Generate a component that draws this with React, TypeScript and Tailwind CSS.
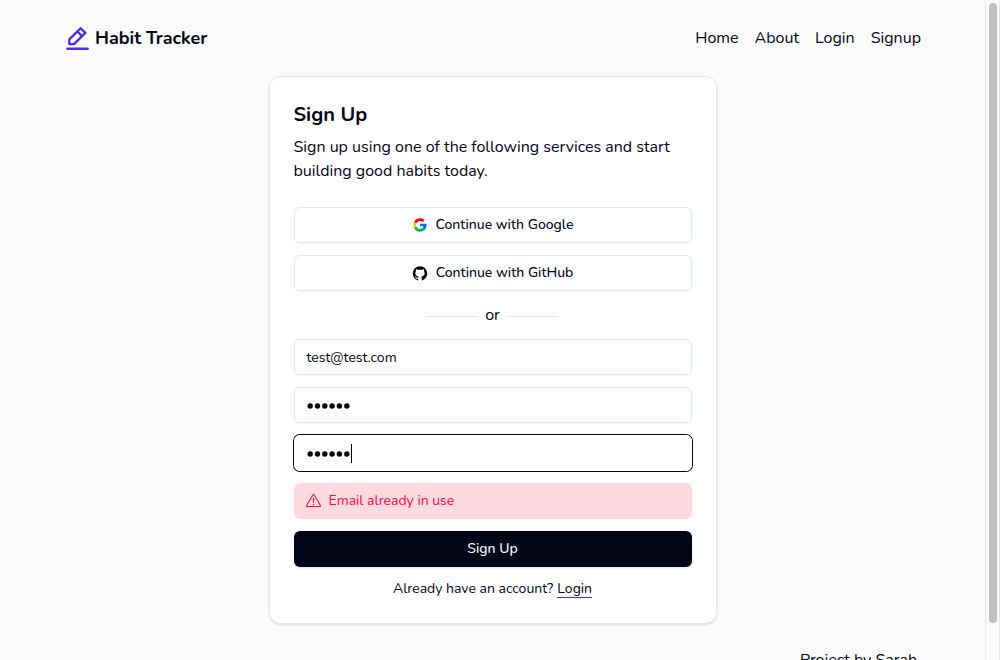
import { RxGithubLogo, RxExclamationTriangle } from "react-icons/rx";

function PencilLogo() {
  return (
    <svg className="h-6 w-6 shrink-0" viewBox="0 0 24 24" fill="none" stroke="#4f2be0" strokeWidth="2.3" strokeLinejoin="round" strokeLinecap="round">
      <path d="M3.3 18.1V13.4L14.6 2.2L19.4 6.9L8 18.1Z" />
      <path d="M11.4 5.5L16 10.1" />
      <path d="M1.4 22.7H21.7" strokeWidth="2.4" />
    </svg>
  );
}

function GoogleLogo() {
  return (
    <svg className="h-4 w-4" viewBox="0 0 48 48">
      <path fill="#0075df" d="M43.611 20.083H24v8h11.303c-.792 2.237-2.231 4.166-4.087 5.571l6.19 5.238C36.971 39.205 44 34 44 24c0-1.341-.138-2.65-.389-3.917z" />
      <path fill="#ff0000" d="M6.306 14.691l6.571 4.819C14.655 15.108 18.961 12 24 12c3.059 0 5.842 1.154 7.961 3.039l5.657-5.657C34.046 6.053 29.268 4 24 4 16.318 4 9.656 8.337 6.306 14.691z" />
      <path fill="#00b83f" d="M24 44c5.166 0 9.86-1.977 13.409-5.192l-6.19-5.238C29.211 35.091 26.715 36 24 36c-5.202 0-9.619-3.317-11.283-7.946l-6.522 5.025C9.505 39.556 16.227 44 24 44z" />
      <path fill="#ffc800" d="M12.717 28.054C12.26 26.78 12 25.42 12 24c0-1.59.31-3.11.877-4.49l-6.571-4.819C4.83 17.47 4 20.65 4 24c0 3.27.79 6.37 2.195 9.079z" />
    </svg>
  );
}

const nav = ["Home", "About", "Login", "Signup"];

const field = "flex h-9 items-center rounded-md border border-slate-200 px-3 text-sm shadow-xs";

function Dots() {
  return (
    <svg className="mt-0.5 h-2 w-11" viewBox="0 0 44 8" fill="#020617">
      {[3.2, 10.5, 17.8, 25.1, 32.4, 39.8].map((x) => (
        <circle key={x} cx={x} cy="4" r="2.7" />
      ))}
    </svg>
  );
}

export default function App() {
  return (
    <div className="flex h-[660px] overflow-hidden bg-[#fafafa] font-['Nunito',sans-serif] text-base text-[#020617]">
      <div className="flex min-w-0 flex-1 flex-col px-16">
        <header className="flex h-19 shrink-0 items-center justify-between">
          <div className="flex items-center gap-[5px] pl-0.5">
            <PencilLogo />
            <span className="text-lg font-bold whitespace-nowrap">Habit Tracker</span>
          </div>
          <nav className="flex gap-4">
            {nav.map((label) => (
              <a key={label} className="whitespace-nowrap">{label}</a>
            ))}
          </nav>
        </header>
        <main className="mx-auto flex h-[548px] w-[448px] shrink-0 flex-col rounded-xl border border-slate-200 bg-white px-6 pt-6 shadow-sm">
          <h1 className="text-xl leading-7 font-bold">Sign Up</h1>
          <p className="mt-1.5 whitespace-nowrap">
            Sign up using one of the following services and start
            <br />
            building good habits today.
          </p>
          <div className="mt-6 flex flex-col gap-3">
            <button className="flex h-9 items-center justify-center gap-2 rounded-md border border-slate-200 text-sm font-medium shadow-xs">
              <GoogleLogo />
              <span>Continue with Google</span>
            </button>
            <button className="flex h-9 items-center justify-center gap-2 rounded-md border border-slate-200 text-sm font-medium shadow-xs">
              <RxGithubLogo className="h-[15px] w-4" />
              <span>Continue with GitHub</span>
            </button>
            <div className="flex h-6 items-center justify-center gap-2">
              <span className="mt-0.5 h-px w-[50px] bg-gray-200" />
              <span>or</span>
              <span className="mt-0.5 h-px w-[50px] bg-gray-200" />
            </div>
            <div className={field}>
              <span className="pt-0.5">test@test.com</span>
            </div>
            <div className={field}><Dots /></div>
            <div className="flex h-9 items-center rounded-md border border-white px-3 ring-1 ring-[#020617]">
              <Dots />
              <span className="h-[19px] w-px bg-black" />
            </div>
            <div className="flex h-9 items-center gap-2 rounded-md bg-[#ffd9e0] px-3 text-sm text-[#ff0a40]">
              <RxExclamationTriangle className="h-[15px] w-[15px]" />
              <span>Email already in use</span>
            </div>
            <button className="flex h-9 items-center justify-center rounded-md bg-[#020617] text-sm font-medium text-slate-50 shadow-sm">
              Sign Up
            </button>
            <p className="flex h-5 items-center justify-center gap-1 text-sm">
              <span>Already have an account?</span>
              <a className="border-b border-[#4f2be0] leading-[17px]">Login</a>
            </p>
          </div>
        </main>
        <footer className="mt-6 flex shrink-0 justify-end pr-1">
          <span className="whitespace-nowrap">Project by Sarah</span>
        </footer>
      </div>
      <div className="h-full w-[15px] shrink-0 border-x border-[#e8e8e8] pt-[3px] pl-[3px]">
        <div className="h-[620px] w-2 rounded-full bg-[#c1c1c1]" />
      </div>
    </div>
  );
}
